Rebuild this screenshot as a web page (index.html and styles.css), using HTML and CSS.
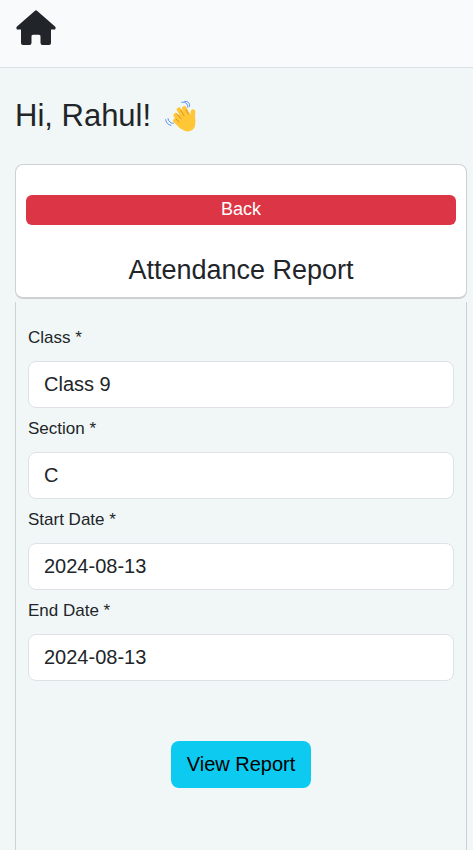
FILE: index.html
```
<!DOCTYPE html>
<html lang="en">
<head>
    <meta charset="UTF-8">
    <meta name="viewport" content="width=device-width, initial-scale=1.0">
    <title>Attendance Report</title>
    <link rel="stylesheet" href="styles.css">
</head>
<body>
    <nav class="navbar">
        <a href="#" class="home-link" aria-label="Home">
            <svg class="home-icon" viewBox="0 0 40 37" aria-hidden="true">
                <path d="M18.700.9a1.900 1.900 0 0 1 2.600 0L39 16.500c1.200 1.100.7 3.100-1 3.100H35V33a2 2 0 0 1-2 2h-6.500a2 2 0 0 1-2-2v-6.500c0-1-.6-1.700-1.600-1.700h-5.800c-1 0-1.600.7-1.600 1.700V33a2 2 0 0 1-2 2H7a2 2 0 0 1-2-2V19.600H2C.3 19.600-.2 17.600 1 16.500z"/>
            </svg>
        </a>
    </nav>

    <main class="content">
        <h1 class="greeting">
            Hi, Rahul!
            <svg class="wave" viewBox="0 0 114 114" role="img" aria-label="Waving hand">
                <path class="fingers" d="M40 71 58 88M41 55 62 76M51 38 71 67M67 34 82 62M93 44 91 66"/>
                <path class="palm" d="M48 58 56 46 72 40q8 14 14 18l13 0q3 16 0 29-4 13-17 16-13 2-24-7L42 77z"/>
                <path class="finger-line" d="m45 51 12 14M56 40l10 16M72 38l7 13M42 66l9 9"/>
                <path class="motion" d="M59 16q9-3 14 3 5 4 5 12M68 13q8-1 12 4 4 4 3 11M18 65q1 7 6 10 4 4 10 4M11 68q1 8 6 12 4 4 10 5"/>
            </svg>
        </h1>

        <section class="card">
            <header class="card-header">
                <button type="button" class="btn btn-danger">Back</button>
                <h2 class="card-title">Attendance Report</h2>
            </header>
            <form class="card-body">
                <div class="field">
                    <label for="class">Class *</label>
                    <input type="text" id="class" value="Class 9">
                </div>
                <div class="field">
                    <label for="section">Section *</label>
                    <input type="text" id="section" value="C">
                </div>
                <div class="field">
                    <label for="startDate">Start Date *</label>
                    <input type="text" id="startDate" value="2024-08-13">
                </div>
                <div class="field">
                    <label for="endDate">End Date *</label>
                    <input type="text" id="endDate" value="2024-08-13">
                </div>
                <button type="button" class="btn btn-info">View Report</button>
            </form>
        </section>
    </main>
</body>
</html>
```

FILE: styles.css
```
* {
  box-sizing: border-box;
}
body {
  display: flex;
  flex-direction: column;
  min-height: 100vh;
  margin: 0;
  background-color: #f1f7f7;
  color: #212529;
  font-family: "Liberation Sans", Arial, sans-serif;
  font-size: 17px;
  line-height: 24px;
}
.navbar {
  padding: 10px 16px 20px;
  background-color: #f8fafc;
  border-bottom: 1px solid #dcdfe1;
}
.home-link {
  display: block;
  width: 40px;
}
.home-icon {
  display: block;
  width: 40px;
  height: 37px;
  fill: #212529;
}
.content {
  display: flex;
  flex: 1;
  flex-direction: column;
  padding: 28px 6px 0 15px;
}
.greeting {
  display: flex;
  align-items: center;
  gap: 11px;
  margin: 0 0 28px;
  font-size: 31px;
  font-weight: 400;
  line-height: 40px;
}
.wave {
  width: 38px;
  height: 38px;
}
.wave path {
  stroke-linecap: round;
}
.palm {
  fill: #ffc636;
}
.fingers {
  fill: none;
  stroke: #ffc636;
  stroke-width: 14;
}
.finger-line {
  fill: none;
  stroke: #dc922b;
  stroke-width: 3;
}
.motion {
  fill: none;
  stroke: #5a91ee;
  stroke-width: 3;
}
.card {
  display: flex;
  flex: 1;
  flex-direction: column;
}
.card-header {
  padding: 30px 10px 10px;
  background-color: white;
  border: 1px solid #cdd1d2;
  border-bottom-width: 2px;
  border-radius: 8px;
  text-align: center;
}
.card-title {
  margin: 28px 0 0;
  font-size: 27px;
  font-weight: 400;
  line-height: 34px;
}
.card-body {
  display: flex;
  flex: 1;
  flex-direction: column;
  margin-top: 3px;
  padding: 24px 12px;
  border: solid #cdd1d2;
  border-width: 0 1px;
}
.btn {
  border: 0;
  font-family: inherit;
  cursor: pointer;
}
.btn-danger {
  display: block;
  width: 100%;
  height: 30px;
  padding: 0 8px 2px;
  background-color: #dc3545;
  border-radius: 6px;
  color: white;
  font-size: 18px;
}
.btn-info {
  align-self: center;
  margin-top: 51px;
  padding: 8px 16px;
  background-color: #0dcaf0;
  border-radius: 8px;
  color: black;
  font-size: 20px;
  line-height: 31px;
}
.field {
  margin-bottom: 9px;
}
.field label {
  display: block;
  margin-bottom: 11px;
}
.field input {
  display: block;
  width: 100%;
  height: 47px;
  padding: 8px 15px;
  background-color: white;
  border: 1px solid #dee2e6;
  border-radius: 8px;
  color: #212529;
  font-family: inherit;
  font-size: 20px;
}
```
